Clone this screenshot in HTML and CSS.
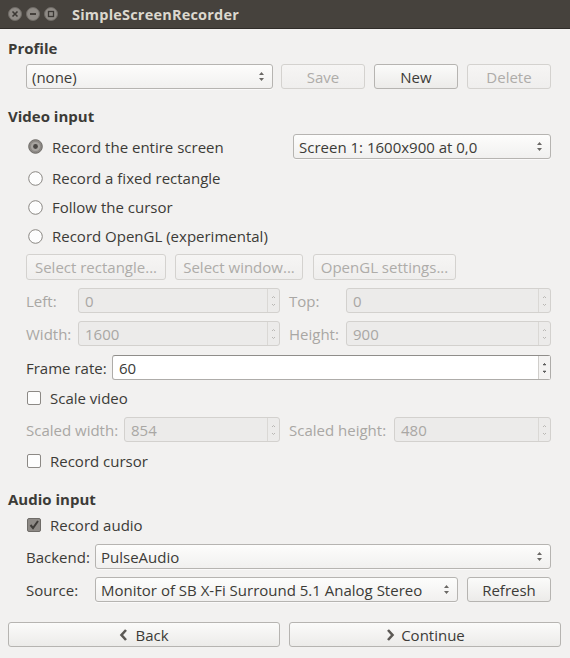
FILE: index.html
```html
<!DOCTYPE html>
<html>
<head>
<meta charset="utf-8">
<link rel="stylesheet" href="styles.css">
</head>
<body>
<div class="titlebar">
  <div class="wbtns">
    <svg class="wbtn" width="14" height="14" viewBox="0 0 14 14"><circle cx="7" cy="7" r="6.5" fill="#8f8b86" stroke="#6f6b66"/><path d="M4.5 4.5 L9.5 9.5 M9.5 4.5 L4.5 9.5" stroke="#3b3834" stroke-width="1.6"/></svg>
    <svg class="wbtn" width="14" height="14" viewBox="0 0 14 14"><circle cx="7" cy="7" r="6.5" fill="#8f8b86" stroke="#6f6b66"/><path d="M4 7 H10" stroke="#3b3834" stroke-width="1.8"/></svg>
    <svg class="wbtn" width="14" height="14" viewBox="0 0 14 14"><circle cx="7" cy="7" r="6.5" fill="#8f8b86" stroke="#6f6b66"/><rect x="4.5" y="4.5" width="5" height="5" fill="none" stroke="#3b3834" stroke-width="1.3"/></svg>
  </div>
  <span class="title">SimpleScreenRecorder</span>
</div>

<div class="body">
  <div class="heading h-profile">Profile</div>
  <div class="inner">
    <div class="row profile-row">
      <div class="combo"><span>(none)</span><svg class="arrows" width="7" height="11" viewBox="0 0 7 11"><path d="M1 4 L3.5 1 L6 4 Z M1 7 L3.5 10 L6 7 Z" fill="#6a6865"/></svg></div>
      <button class="btn dis">Save</button>
      <button class="btn">New</button>
      <button class="btn dis">Delete</button>
    </div>
  </div>

  <div class="heading h-video">Video input</div>
  <div class="inner">
    <div class="row r1">
      <label class="opt"><svg class="radio" width="15" height="15" viewBox="0 0 15 15"><circle cx="7.5" cy="7.5" r="6.8" fill="#8d8985" stroke="#6d6a66"/><circle cx="7.5" cy="7.5" r="4.6" fill="#a8a5a1"/><circle cx="7.5" cy="7.5" r="2.4" fill="#4a4744"/></svg>Record the entire screen</label>
      <div class="combo screen-combo"><span>Screen 1: 1600x900 at 0,0</span><svg class="arrows" width="7" height="11" viewBox="0 0 7 11"><path d="M1 4 L3.5 1 L6 4 Z M1 7 L3.5 10 L6 7 Z" fill="#6a6865"/></svg></div>
    </div>
    <div class="row opt-row">
      <label class="opt"><svg class="radio" width="15" height="15" viewBox="0 0 15 15"><circle cx="7.5" cy="7.5" r="6.8" fill="#fdfdfd" stroke="#8a8783"/></svg>Record a fixed rectangle</label>
    </div>
    <div class="row opt-row">
      <label class="opt"><svg class="radio" width="15" height="15" viewBox="0 0 15 15"><circle cx="7.5" cy="7.5" r="6.8" fill="#fdfdfd" stroke="#8a8783"/></svg>Follow the cursor</label>
    </div>
    <div class="row opt-row">
      <label class="opt"><svg class="radio" width="15" height="15" viewBox="0 0 15 15"><circle cx="7.5" cy="7.5" r="6.8" fill="#fdfdfd" stroke="#8a8783"/></svg>Record OpenGL (experimental)</label>
    </div>
    <div class="row btn-row">
      <button class="btn dis b-rect">Select rectangle...</button>
      <button class="btn dis b-win">Select window...</button>
      <button class="btn dis b-gl">OpenGL settings...</button>
    </div>

    <div class="grid4 g-left">
      <span class="lbl dis-t">Left:</span>
      <div class="spin dis"><span class="val">0</span><span class="spinbtn"><svg width="5" height="14" viewBox="0 0 5 14"><path d="M1 4 L2.5 2.5 L4 4 M1 10 L2.5 11.5 L4 10" stroke="#b9b7b4" fill="none"/></svg></span></div>
      <span class="lbl lbl-r dis-t">Top:</span>
      <div class="spin dis"><span class="val">0</span><span class="spinbtn"><svg width="5" height="14" viewBox="0 0 5 14"><path d="M1 4 L2.5 2.5 L4 4 M1 10 L2.5 11.5 L4 10" stroke="#b9b7b4" fill="none"/></svg></span></div>
    </div>
    <div class="grid4 g-width">
      <span class="lbl dis-t">Width:</span>
      <div class="spin dis"><span class="val">1600</span><span class="spinbtn"><svg width="5" height="14" viewBox="0 0 5 14"><path d="M1 4 L2.5 2.5 L4 4 M1 10 L2.5 11.5 L4 10" stroke="#b9b7b4" fill="none"/></svg></span></div>
      <span class="lbl lbl-r dis-t">Height:</span>
      <div class="spin dis"><span class="val">900</span><span class="spinbtn"><svg width="5" height="14" viewBox="0 0 5 14"><path d="M1 4 L2.5 2.5 L4 4 M1 10 L2.5 11.5 L4 10" stroke="#b9b7b4" fill="none"/></svg></span></div>
    </div>
    <div class="row frame-row">
      <span class="lbl frame-lbl">Frame rate:</span>
      <div class="spin live"><span class="val">60</span><span class="spinbtn"><svg width="5" height="14" viewBox="0 0 5 14"><path d="M1.2 3.8 L2.5 2.5 L3.8 3.8 Z M1.2 10.2 L2.5 11.5 L3.8 10.2 Z" stroke="#555" fill="#555"/></svg></span></div>
    </div>
    <div class="row opt-row scale-row">
      <label class="opt chk-opt"><span class="chk"></span>Scale video</label>
    </div>
    <div class="grid4 g-scaled">
      <span class="lbl dis-t">Scaled width:</span>
      <div class="spin dis"><span class="val">854</span><span class="spinbtn"><svg width="5" height="14" viewBox="0 0 5 14"><path d="M1 4 L2.5 2.5 L4 4 M1 10 L2.5 11.5 L4 10" stroke="#b9b7b4" fill="none"/></svg></span></div>
      <span class="lbl lbl-r dis-t">Scaled height:</span>
      <div class="spin dis"><span class="val">480</span><span class="spinbtn"><svg width="5" height="14" viewBox="0 0 5 14"><path d="M1 4 L2.5 2.5 L4 4 M1 10 L2.5 11.5 L4 10" stroke="#b9b7b4" fill="none"/></svg></span></div>
    </div>
    <div class="row opt-row cursor-row">
      <label class="opt chk-opt"><span class="chk"></span>Record cursor</label>
    </div>
  </div>

  <div class="heading h-audio">Audio input</div>
  <div class="inner">
    <div class="row opt-row audio-row">
      <label class="opt chk-opt"><span class="chk on"><svg width="12" height="12" viewBox="0 0 12 12"><path d="M2.5 6 L5 9 L10 2" stroke="#3e3b38" stroke-width="2" fill="none"/></svg></span>Record audio</label>
    </div>
    <div class="row backend-row">
      <span class="lbl lbl-b">Backend:</span>
      <div class="combo grow"><span>PulseAudio</span><svg class="arrows" width="7" height="11" viewBox="0 0 7 11"><path d="M1 4 L3.5 1 L6 4 Z M1 7 L3.5 10 L6 7 Z" fill="#6a6865"/></svg></div>
    </div>
    <div class="row source-row">
      <span class="lbl lbl-b">Source:</span>
      <div class="combo grow"><span>Monitor of SB X-Fi Surround 5.1 Analog Stereo</span><svg class="arrows" width="7" height="11" viewBox="0 0 7 11"><path d="M1 4 L3.5 1 L6 4 Z M1 7 L3.5 10 L6 7 Z" fill="#6a6865"/></svg></div>
      <button class="btn b-refresh">Refresh</button>
    </div>
  </div>

  <div class="row bottom-row">
    <button class="btn big"><svg width="10" height="12" viewBox="0 0 10 12"><path d="M7 1 L2.5 6 L7 11" stroke="#5c5955" stroke-width="2.6" fill="none"/></svg>Back</button>
    <button class="btn big"><svg width="10" height="12" viewBox="0 0 10 12"><path d="M3 1 L7.5 6 L3 11" stroke="#5c5955" stroke-width="2.6" fill="none"/></svg>Continue</button>
  </div>
</div>
</body>
</html>
```

FILE: styles.css
```css
* { box-sizing: border-box; }
html, body { margin: 0; padding: 0; }
body {
  background: #f2f1f0;
  font-family: "Open Sans", "Noto Sans", sans-serif;
  font-size: 15px;
  color: #3c3b37;
  width: 570px;
  height: 658px;
  overflow: hidden;
}
.titlebar {
  height: 29px;
  background: #46423d;
  display: flex;
  align-items: center;
  border-bottom: 1px solid #2f2c29;
}
.wbtns { display: flex; gap: 4px; padding-left: 8px; }
.wbtn { display: block; }
.title {
  margin-left: 14px;
  color: #dcd8cf;
  font-weight: bold;
  font-size: 14.5px;
  letter-spacing: 0.2px;
}
.body { padding: 0 9px 0 8px; display: flex; flex-direction: column; }
.heading { font-weight: bold; font-size: 15px; height: 18px; line-height: 18px; }
.h-profile { margin-top: 10px; }
.h-video { margin-top: 18px; }
.h-audio { margin-top: 17px; }
.inner { padding: 0 10px 0 18px; display: flex; flex-direction: column; }
.row { display: flex; align-items: center; }
.profile-row { margin-top: 7px; gap: 8px; }
.profile-row .combo { flex: 1; }
.profile-row .btn { width: 84px; flex: none; }
.profile-row .btn + .btn { margin-left: 1px; }

.combo {
  height: 25px;
  display: flex;
  align-items: center;
  padding: 0 7px 0 5px;
  border: 1px solid #b6b4b1;
  border-radius: 3px;
  background: linear-gradient(#fdfdfc, #f1f0ef);
  white-space: nowrap;
  box-shadow: 0 1px 0 rgba(255,255,255,0.6);
  min-width: 0;
}
.combo .arrows { margin-left: auto; flex: none; }
.grow { flex: 1; }

.btn {
  height: 25px;
  font: inherit;
  color: #3c3b37;
  border: 1px solid #b6b4b1;
  border-radius: 3px;
  background: linear-gradient(#fbfbfa, #ecebe9);
  padding: 0 4px;
  display: flex;
  align-items: center;
  justify-content: center;
  white-space: nowrap;
}
.btn.dis { color: #aeaca9; border-color: #d4d2cf; background: linear-gradient(#f6f5f4, #efeeed); }

.r1 { margin-top: 9px; height: 25px; justify-content: space-between; }
.screen-combo { width: 258px; }
.opt { display: flex; align-items: center; gap: 9px; padding-left: 2px; }
.radio { display: block; flex: none; }
.opt-row { height: 24px; margin-top: 5px; }
.r1 + .opt-row { margin-top: 7px; }
.btn-row { margin-top: 6px; gap: 9px; height: 26px; }
.btn-row .btn { height: 26px; flex: none; }
.b-rect { width: 140px; }
.b-win { width: 128px; }
.b-gl { width: 143px; margin-left: 1px; }

.grid4 {
  display: grid;
  grid-template-columns: 52px 202px 66px 1fr;
  align-items: center;
  height: 25px;
}
.g-left { margin-top: 8px; }
.g-width { margin-top: 8px; }
.g-scaled { margin-top: 7px; grid-template-columns: 98px 156px 114px 1fr; }
.lbl { white-space: nowrap; }
.lbl-r { padding-left: 9px; }
.dis-t { color: #a9a7a4; }

.spin {
  height: 25px;
  display: flex;
  border: 1px solid #d3d1ce;
  border-radius: 3px;
  background: #ecebea;
  color: #a9a7a4;
}
.spin .val { flex: 1; display: flex; align-items: center; padding-left: 6px; }
.spinbtn {
  width: 12px;
  border-left: 1px solid #dad8d5;
  display: flex;
  align-items: center;
  justify-content: center;
}
.spin.live {
  flex: 1;
  background: #fff;
  color: #3c3b37;
  border-color: #aeaca9;
  border-top-color: #8f8d8a;
}
.spin.live .spinbtn { border-left-color: #d0cecb; background: #f4f3f2; }
.frame-row { margin-top: 9px; height: 25px; }
.frame-lbl { width: 86px; flex: none; }
.scale-row { margin-top: 6px; }
.cursor-row { margin-top: 7px; }

.chk {
  width: 14px;
  height: 14px;
  border: 1px solid #8c8985;
  border-radius: 2px;
  background: #fdfdfd;
  flex: none;
  display: flex;
  align-items: center;
  justify-content: center;
}
.chk.on { background: #8e8a86; border-color: #6f6c68; }
.chk-opt { gap: 9px; padding-left: 1px; }
.audio-row { margin-top: 5px; }
.backend-row { margin-top: 7px; height: 25px; }
.source-row { margin-top: 8px; height: 25px; }
.lbl-b { width: 69px; flex: none; }
.b-refresh { width: 84px; flex: none; margin-left: 9px; }

.bottom-row { margin-top: 20px; gap: 9px; }
.btn.big { flex: 1; height: 25px; gap: 6px; }
.btn.big svg { display: block; }
```
